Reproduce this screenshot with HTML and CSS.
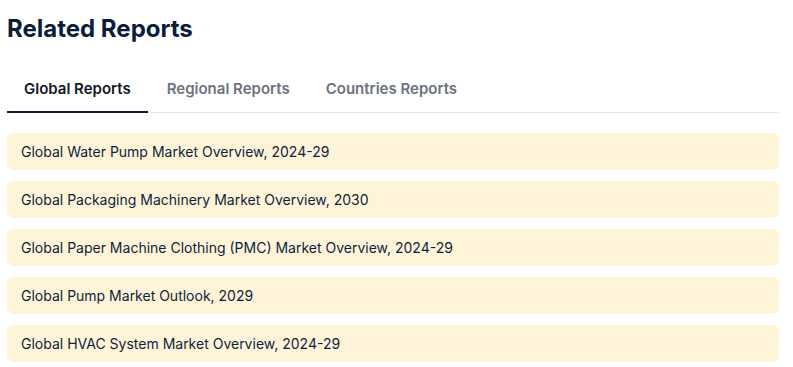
FILE: index.html
```html
<!DOCTYPE html>
<html lang="en">
<head>
    <meta charset="UTF-8">
    <meta name="viewport" content="width=device-width, initial-scale=1.0">
    <title>Related Reports</title>
    <link rel="stylesheet" href="styles.css">
</head>
<body>
    <div class="container">
        <h2 class="title">Related Reports</h2>
        <div class="tabs">
            <button class="tab active">Global Reports</button>
            <button class="tab">Regional Reports</button>
            <button class="tab">Countries Reports</button>
        </div>
        <div class="report-list">
            <a class="report-item" href="#">Global Water Pump Market Overview, 2024-29</a>
            <a class="report-item" href="#">Global Packaging Machinery Market Overview, 2030</a>
            <a class="report-item" href="#">Global Paper Machine Clothing (PMC) Market Overview, 2024-29</a>
            <a class="report-item" href="#">Global Pump Market Outlook, 2029</a>
            <a class="report-item" href="#">Global HVAC System Market Overview, 2024-29</a>
        </div>
    </div>
</body>
</html>
```

FILE: styles.css
```css
* { margin: 0; padding: 0; box-sizing: border-box; }
body { background: #fff; font-family: Inter, "Noto Sans", Arial, sans-serif; color: #0c1f3f; }
.container { padding: 14px 14px 0 7px; }
.title { font-size: 24px; font-weight: 700; line-height: 30px; color: #0a1d3b; }
.tabs { display: flex; margin-top: 35px; border-bottom: 1px solid #e5e7eb; }
.tab { font-family: inherit; font-size: 15px; font-weight: 600; line-height: 20px; color: #6b7280; background: none; border: none; padding: 0 17px 12px; margin-right: 2px; border-bottom: 2px solid transparent; margin-bottom: -1px; cursor: pointer; }
.tab.active { color: #111827; border-bottom-color: #0a1d3b; }
.report-list { display: flex; flex-direction: column; gap: 11px; margin-top: 20px; }
.report-item { display: block; background: #fff4d7; border-radius: 6px; padding: 10px 14px; font-size: 14px; line-height: 17px; color: #0c1f3f; text-decoration: none; }
```
